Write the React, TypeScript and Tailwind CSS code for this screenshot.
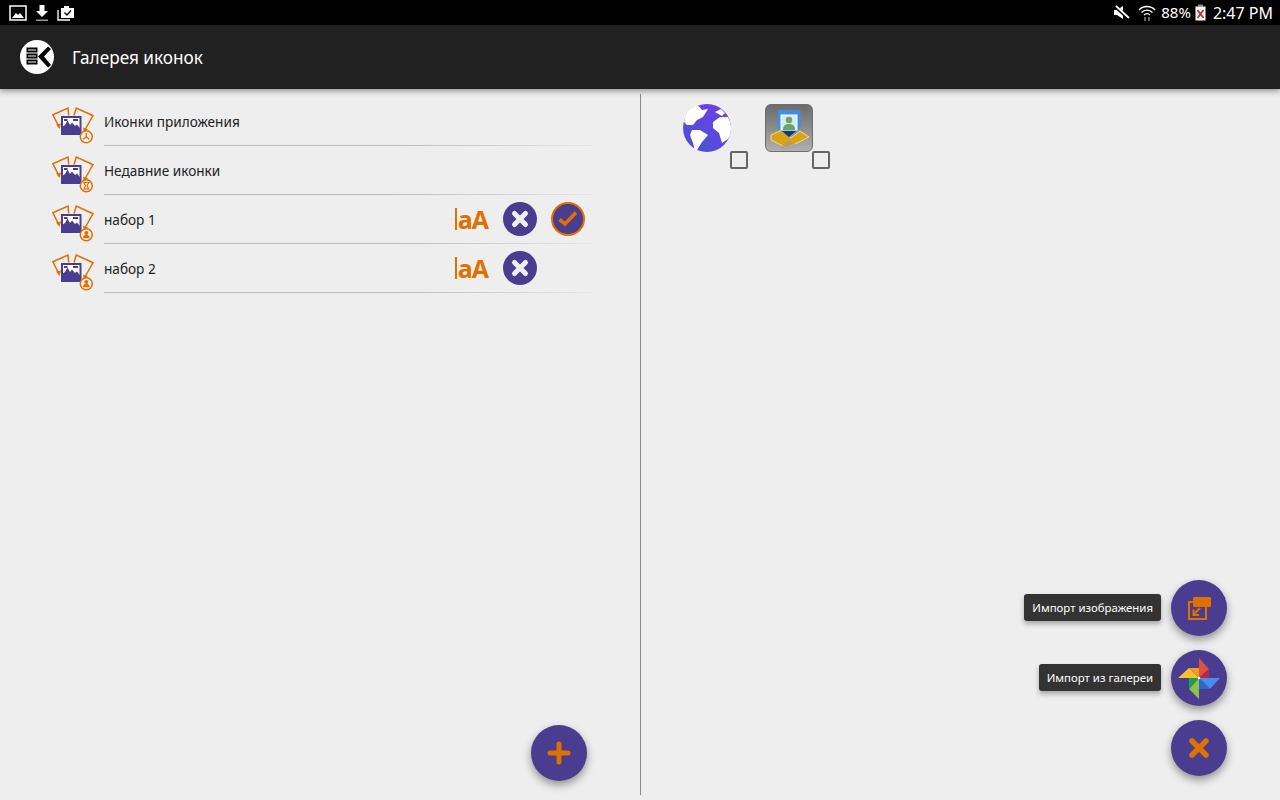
const PURPLE = "#4a3c8f";
const ORANGE = "#e07000";

function SetIcon({ badge }: { badge: "app" | "recent" | "user" }) {
  return (
    <svg width="44" height="44" viewBox="0 0 44 44" className="shrink-0">
      <rect x="10" y="12" width="18.500" height="17" fill="#fff" stroke={PURPLE} strokeWidth="2" />
      <path d="M10 29 L10 22 L13 20 L15.500 15.500 L18 20 L20 17.500 L23 21 L25 19.500 L28.500 24 L28.500 29 Z" fill={PURPLE} />
      <path d="M12 14h3.500v2H12zM21 14h5v2h-5z" fill={PURPLE} />
      <path d="M16.700 10.500 L16 3 L0.800 9.700 L6.500 21" fill="none" stroke={ORANGE} strokeWidth="1.500" />
      <path d="M22 10.500 L24.300 3 L41 10.700 L33.500 24" fill="none" stroke={ORANGE} strokeWidth="1.500" />
      <path d="M4 19.500 L9 18.500 L7.500 24 Z M31 22.500 L36 24.500 L32 27.500 Z" fill={ORANGE} />
      <circle cx="34.300" cy="31.700" r="6" fill="#eeeeee" stroke={ORANGE} strokeWidth="1.500" />
      {badge === "app" && (
        <path d="M34.300 28v3.700M34.300 31.700l-3 2.500M34.300 31.700l3 2.500" stroke={ORANGE} strokeWidth="1.300" fill="none" />
      )}
      {badge === "recent" && (
        <path d="M31.800 28.500h5L35 31.700l1.800 3.200h-5l1.800-3.200z" fill="none" stroke={ORANGE} strokeWidth="1.100" />
      )}
      {badge === "user" && (
        <g fill={ORANGE}>
          <circle cx="34.300" cy="30" r="2" />
          <path d="M31 35.200c0-2.600 1.500-3.400 3.300-3.400s3.300.8 3.300 3.400z" />
        </g>
      )}
    </svg>
  );
}

function RoundX() {
  return (
    <div className="flex h-[34px] w-[34px] items-center justify-center rounded-full bg-[#4a3c8f]">
      <svg width="20" height="20" viewBox="0 0 20 20">
        <path d="M4.500 4.500 L15.500 15.500 M15.500 4.500 L4.500 15.500" stroke="#eeeeee" strokeWidth="5" strokeLinecap="round" />
      </svg>
    </div>
  );
}

function RoundCheck() {
  return (
    <div className="flex h-[34px] w-[34px] items-center justify-center rounded-full border-2 border-[#e07000] bg-[#4a3c8f]">
      <svg width="20" height="20" viewBox="0 0 20 20">
        <path d="M1.500 10.500 L7 15 L18 3.500" fill="none" stroke="#e07000" strokeWidth="3.600" />
      </svg>
    </div>
  );
}

function FontMark() {
  return (
    <div className="flex items-center font-['Open_Sans',sans-serif] text-[25px] leading-none font-bold tracking-[-1px] text-[#e07000]">
      <span className="mr-px h-[22px] w-[2px] bg-[#e07000]" />
      aA
    </div>
  );
}

function Row({
  label,
  badge,
  actions,
  active,
}: {
  label: string;
  badge: "app" | "recent" | "user";
  actions?: boolean;
  active?: boolean;
}) {
  return (
    <div className="flex h-[49px] pl-[52px]">
      <div className="mt-[8px]">
        <SetIcon badge={badge} />
      </div>
      <div className="relative ml-2 flex w-[488px] items-center">
        <span className="mt-[2px] text-[13.6px] text-[#222222]">{label}</span>
        {actions && (
          <div className="ml-auto flex items-center pb-px">
            <FontMark />
            <div className="ml-[15px]">
              <RoundX />
            </div>
            <div className="mr-[7px] ml-[14px] w-[34px]">{active && <RoundCheck />}</div>
          </div>
        )}
        <div className="absolute right-0 bottom-0 left-0 h-px bg-linear-to-r from-[#bcbcbc] from-60% to-[#e6e6e6]" />
      </div>
    </div>
  );
}

function Fab({ children }: { children: React.ReactNode }) {
  return (
    <div className="flex h-14 w-14 items-center justify-center rounded-full bg-[#4a3c8f] shadow-[0_4px_8px_rgba(0,0,0,0.4)]">
      {children}
    </div>
  );
}

function Tip({ text }: { text: string }) {
  return (
    <div className="mr-[10px] mb-px flex h-[27px] items-center rounded-[3px] bg-[#333333] px-2 text-[11.4px] text-white shadow-[0_3px_5px_rgba(0,0,0,0.3)]">
      {text}
    </div>
  );
}

function Pinwheel() {
  return (
    <svg width="44" height="44" viewBox="-22 -22 44 44">
      <path d="M0 -20 L10 -9 L0 0 Z" fill="#e0503f" />
      <path d="M10 -9 L10 0 L0 0 Z" fill="#b02a50" />
      <path d="M21 0 L11 11 L0 0 Z" fill="#4a8bf0" />
      <path d="M0 0 L11 11 L0 11 Z" fill="#2f66c8" />
      <path d="M0 21 L-10 11 L0 0 Z" fill="#8bc34a" />
      <path d="M-10 11 L-10 0 L0 0 Z" fill="#1f9d55" />
      <path d="M-21 0 L-10 -10 L0 0 Z" fill="#fbc02d" />
      <path d="M-10 -10 L0 -10 L0 0 Z" fill="#f59a23" />
      <circle r="1.300" fill="#fff" />
    </svg>
  );
}

export default function App() {
  return (
    <div className="relative flex h-[800px] w-[1280px] flex-col overflow-hidden bg-[#eeeeee] font-['Noto_Sans',sans-serif]">
      {/* status bar */}
      <div className="flex h-[25px] shrink-0 items-center bg-black pr-[7px] pl-[9px] text-white">
        <svg width="18" height="16" viewBox="0 0 18 16">
          <rect x="1" y="1" width="16" height="14" fill="none" stroke="#fff" strokeWidth="1.500" />
          <path d="M3 13 L7 8 L9 10 L11 8 L15 13 Z" fill="#fff" />
        </svg>
        <svg width="16" height="18" viewBox="0 0 16 18" className="ml-[7px]">
          <path d="M5.500 1h5v6h3.500L8 13 2 7h3.500z" fill="#fff" />
          <rect x="2" y="15.500" width="12" height="1.500" fill="#999" />
        </svg>
        <svg width="18" height="16" viewBox="0 0 18 16" className="ml-[7px]">
          <path d="M1 5v10h12" fill="none" stroke="#fff" strokeWidth="1.300" />
          <path d="M4 3h3V1h5v2h5v10H4z" fill="#fff" />
          <path d="M7.500 7.500l2.500 2.500 4-4.500" fill="none" stroke="#000" strokeWidth="1.300" />
        </svg>
        <div className="ml-auto flex items-center">
          <svg width="18" height="18" viewBox="0 0 18 18">
            <path d="M1 6h3l6-4v13l-6-4H1z" fill="#fff" />
            <path d="M2 2 L16 15" stroke="#000" strokeWidth="3.500" />
            <path d="M3 2 L16 14" stroke="#fff" strokeWidth="1.800" />
          </svg>
          <svg width="18" height="18" viewBox="0 0 18 18" className="ml-[7px]">
            <path d="M1 6 a11 11 0 0 1 16 0 M3.500 8.500 a7.500 7.500 0 0 1 11 0 M6 11 a4 4 0 0 1 6 0" fill="none" stroke="#fff" strokeWidth="1.400" />
            <path d="M7 13v4M11 13v4" stroke="#999" strokeWidth="1.300" />
          </svg>
          <span className="ml-[5px] text-[15px] leading-none">88%</span>
          <svg width="11" height="17" viewBox="0 0 11 17" className="ml-[4px]">
            <rect x="3" y="0.500" width="5" height="2" fill="#888" />
            <rect x="0.500" y="2.500" width="10" height="14" fill="#fff" />
            <path d="M2.500 6 L8.500 14 M8.500 6 L2.500 14" stroke="#d32f2f" strokeWidth="2" />
          </svg>
          <span className="ml-[7px] text-[16px] leading-none">2:47 PM</span>
        </div>
      </div>

      {/* app bar */}
      <div className="z-10 flex h-16 shrink-0 items-center bg-[#212121] pl-5 shadow-[0_2px_6px_rgba(0,0,0,0.4)]">
        <svg width="34" height="34" viewBox="0 0 34 34">
          <circle cx="17" cy="17" r="17" fill="#fff" />
          <rect x="6.500" y="7.500" width="11" height="5" fill="#000" />
          <rect x="8" y="9" width="8" height="2" fill="#fff" opacity="0.500" />
          <rect x="6.500" y="13.500" width="11" height="5" fill="#000" />
          <rect x="8" y="15" width="8" height="2" fill="#fff" opacity="0.500" />
          <rect x="6.500" y="19.500" width="11" height="5" fill="#000" />
          <rect x="8" y="21" width="8" height="2" fill="#fff" opacity="0.500" />
          <path d="M18 16.500 L28 6.500 L31 9 L24 16.500 L31 25 L28 27.500 Z" fill="#000" />
        </svg>
        <span className="mt-px ml-[18px] text-[17.2px] text-white">Галерея иконок</span>
      </div>

      {/* panels */}
      <div className="flex flex-1 py-[5px]">
        <div className="w-[640px] shrink-0 pt-[3px]">
          <Row label="Иконки приложения" badge="app" />
          <Row label="Недавние иконки" badge="recent" />
          <Row label="набор 1" badge="user" actions active />
          <Row label="набор 2" badge="user" actions />
        </div>
        <div className="w-px shrink-0 bg-[#8a8a8a]" />
        <div className="flex flex-1 gap-[17px] pt-[10px] pl-[42px]">
          <div className="flex items-start">
            <svg width="48" height="48" viewBox="0 0 48 48">
              <defs>
                <linearGradient id="globe" x1="0.700" y1="0" x2="0.300" y2="1">
                  <stop offset="0" stopColor="#6f3fe2" />
                  <stop offset="1" stopColor="#4a52d6" />
                </linearGradient>
              </defs>
              <circle cx="24" cy="24" r="24" fill="url(#globe)" />
              <path d="M15 1.500 L19 6 L25 5 L20 13 L14 16 L10 21 L4 21 L1 18 C2 13 4 8 7 5.500 C9 4 12 2.500 15 1.500 Z" fill="#fff" />
              <path d="M9 26 L17 26 L25 31 L19 38 L14 46 C13 46 12 45.500 11.500 45 L10 39 L7 31 Z" fill="#fff" />
              <path d="M30 18 L37 13 L45 13 C47 17 48 21 48 24 C48 29 47 32 45 35 L39 39 L36 29 L30 24 Z" fill="#fff" />
              <path d="M32 8 L38 5 L42 9 L39 12 Z" fill="#fff" />
            </svg>
            <div className="mt-[47px] -ml-px h-[18px] w-[18px] rounded-[2px] border-2 border-[#666666]" />
          </div>
          <div className="flex items-start">
            <div className="h-12 w-12 rounded-md border border-[#6e6e6e] bg-linear-to-b from-[#6c6c6c] via-[#8c8c8c] to-[#b0b0b0]">
              <svg width="46" height="46" viewBox="0 0 46 46">
                <path d="M5 30 L16 25 L25 33 L34 26 L43 32 L29 39 L21 43 L5 35 Z" fill="#d9a41a" stroke="#f3dc8e" strokeWidth="1" />
                <path d="M13 43 L22 36 L31 40 L22 44 Z" fill="#9a9a9a" opacity="0.600" />
                <path d="M13 5 H33 a1.500 1.500 0 0 1 1.500 1.500 V23 L23 32 L11.500 23 V6.500 A1.500 1.500 0 0 1 13 5 Z" fill="#3f8fe0" />
                <path d="M23 32 L16 26 H30 Z" fill="#123a78" />
                <rect x="15" y="10" width="16" height="15" fill="#d6eaee" stroke="#fff" />
                <circle cx="23" cy="15" r="3.200" fill="#6aa56a" />
                <path d="M17 25 c0-4.500 2.500-6 6-6 s6 1.500 6 6z" fill="#6aa56a" />
              </svg>
            </div>
            <div className="mt-[47px] -ml-px h-[18px] w-[18px] rounded-[2px] border-2 border-[#666666]" />
          </div>
        </div>
      </div>

      {/* floating buttons */}
      <div className="absolute top-[725px] left-[531px]">
        <Fab>
          <svg width="26" height="26" viewBox="0 0 26 26">
            <path d="M13 4v18M4 13h18" stroke="#e07000" strokeWidth="5" strokeLinecap="round" />
          </svg>
        </Fab>
      </div>
      <div className="absolute top-[580px] right-[53px] flex flex-col items-end gap-[14px]">
        <div className="flex items-center">
          <Tip text="Импорт изображения" />
          <Fab>
            <svg width="28" height="28" viewBox="0 0 28 28">
              <rect x="8" y="3" width="18" height="10" rx="1" fill="#e07000" />
              <path d="M8 8 H4 V25 H21 V13" fill="none" stroke="#e07000" strokeWidth="2" />
              <path d="M15 14 L9 20 M8.500 15.500 V21 H14" fill="none" stroke="#e07000" strokeWidth="2" />
            </svg>
          </Fab>
        </div>
        <div className="flex items-center">
          <Tip text="Импорт из галереи" />
          <Fab>
            <Pinwheel />
          </Fab>
        </div>
        <Fab>
          <svg width="24" height="24" viewBox="0 0 24 24">
            <path d="M5 5 L19 19 M19 5 L5 19" stroke="#e07000" strokeWidth="5.500" strokeLinecap="round" />
          </svg>
        </Fab>
      </div>
    </div>
  );
}
